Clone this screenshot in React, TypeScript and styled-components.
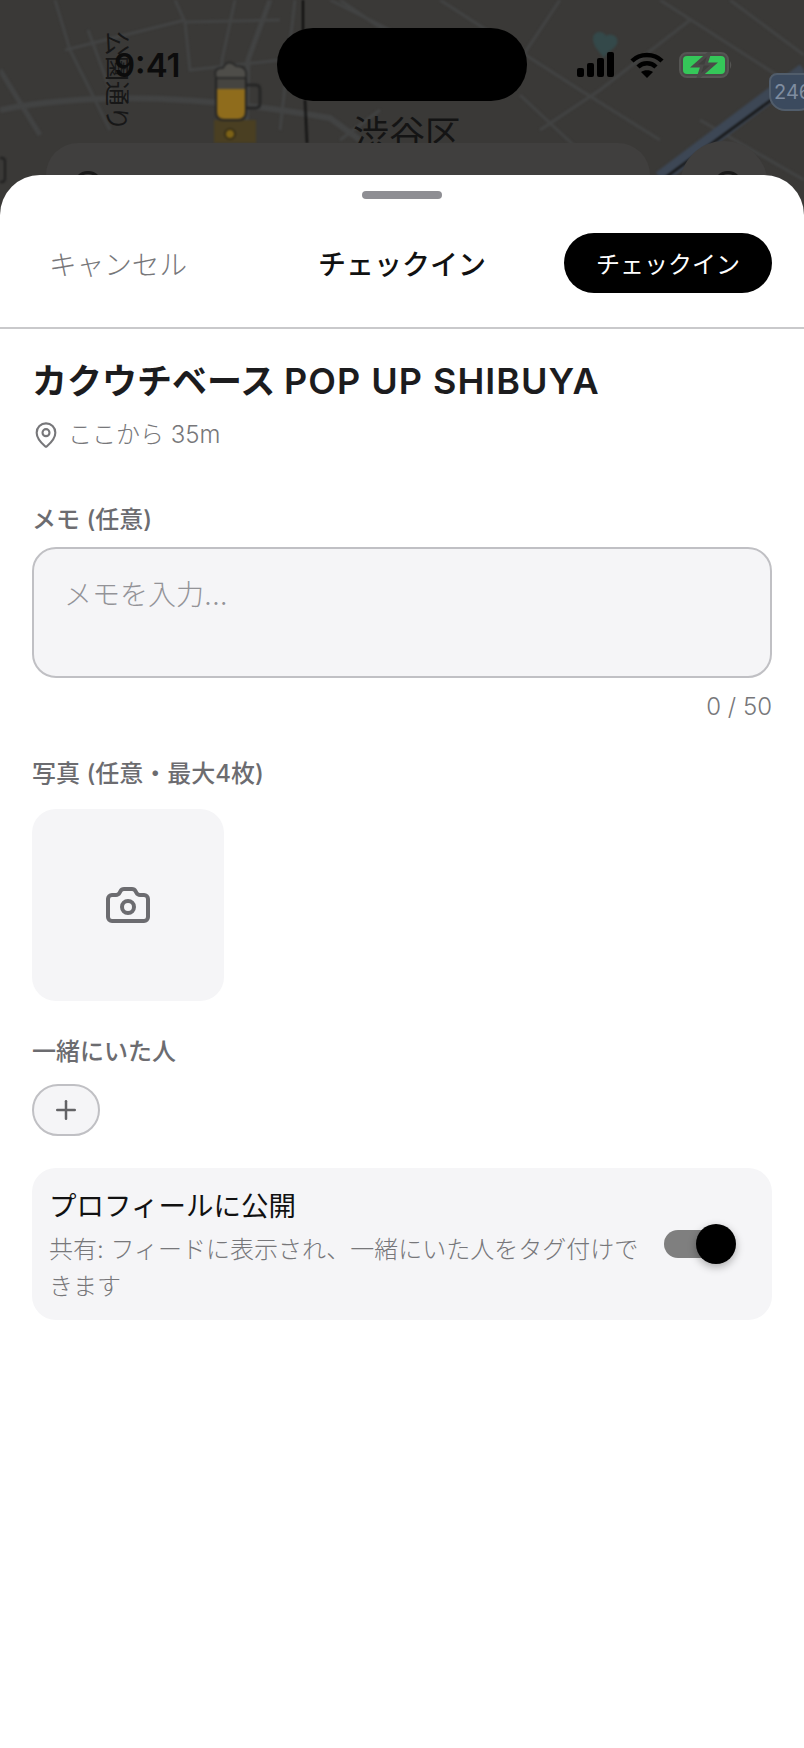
import styled, { createGlobalStyle } from "styled-components";
import { Camera, MapPin, Plus } from "lucide-react";

const GlobalStyle = createGlobalStyle`
  html, body {
    margin: 0;
    padding: 0;
    background: #3a3937;
  }
  * {
    box-sizing: border-box;
  }
  body {
    font-family: Inter, "Noto Sans CJK JP", sans-serif;
  }
`;

const Page = styled.div`
  width: 804px;
  height: 1748px;
  overflow: hidden;
  display: flex;
  flex-direction: column;
`;

const MapArea = styled.div`
  position: relative;
  flex: none;
  height: 225px;
  margin-bottom: -50px;
  background: #3a3937;
  overflow: hidden;
`;

const MapDrawing = styled.svg`
  position: absolute;
  inset: 0;
  width: 804px;
  height: 225px;
  filter: blur(0.8px);
`;

const DistrictLabel = styled.span`
  position: absolute;
  left: 353px;
  top: 110px;
  font-size: 36px;
  line-height: 48px;
  color: #141414;
`;

const RoadLabel = styled.span`
  position: absolute;
  left: 102px;
  top: 31px;
  font-size: 25px;
  line-height: 30px;
  color: #171717;
  writing-mode: vertical-rl;
  text-orientation: sideways;
`;

const SearchBar = styled.div`
  position: absolute;
  left: 46px;
  top: 143px;
  width: 604px;
  height: 90px;
  border-radius: 32px 32px 0 0;
  background: #403f3e;
  &::after {
    content: "";
    position: absolute;
    left: 27px;
    top: 28px;
    width: 24px;
    height: 24px;
    border-radius: 50%;
    border: 3px solid #1a1a1a;
  }
`;

const MapButton = styled.div`
  position: absolute;
  left: 680px;
  top: 141px;
  width: 88px;
  height: 88px;
  border-radius: 50%;
  background: #403f3e;
  &::after {
    content: "";
    position: absolute;
    left: 33px;
    top: 30px;
    width: 24px;
    height: 24px;
    border-radius: 50%;
    border: 3px solid #1a1a1a;
  }
`;

const RouteSign = styled.div`
  position: absolute;
  left: 769px;
  top: 73px;
  width: 46px;
  height: 38px;
  border-radius: 8px 8px 16px 16px;
  border: 2px solid #515d6b;
  background: #3b4a5e;
  color: #7f8da0;
  font-size: 20px;
  line-height: 34px;
  padding-left: 3px;
`;

const StatusBar = styled.div`
  position: absolute;
  top: 28px;
  left: 0;
  right: 0;
  height: 73px;
  display: grid;
  grid-template-columns: 277px 250px 1fr;
  align-items: center;
`;

const Time = styled.span`
  justify-self: start;
  margin-left: 114px;
  font-family: Inter, sans-serif;
  font-size: 33px;
  font-weight: 600;
  color: #0c0c0c;
`;

const Island = styled.div`
  height: 73px;
  border-radius: 36px;
  background: #000;
`;

const StatusIcons = styled.div`
  display: flex;
  align-items: center;
  margin-left: 50px;
  gap: 15px;
`;

const Sheet = styled.div`
  position: relative;
  flex: 1;
  display: flex;
  flex-direction: column;
  background: #fff;
  border-radius: 40px 40px 0 0;
`;

const Handle = styled.div`
  align-self: center;
  width: 80px;
  height: 8px;
  margin-top: 16px;
  border-radius: 4px;
  background: #8e8e93;
`;

const Header = styled.div`
  display: grid;
  grid-template-columns: 1fr auto 1fr;
  align-items: center;
  height: 130px;
  padding: 0 32px 1px;
  border-bottom: 2px solid #c9c9cb;
`;

const CancelText = styled.span`
  padding-left: 17px;
  font-size: 27.6px;
  font-weight: 300;
  color: #77777a;
`;

const HeaderTitle = styled.span`
  font-size: 28px;
  font-weight: 500;
  color: #111;
`;

const PrimaryButton = styled.button`
  justify-self: end;
  width: 208px;
  height: 60px;
  border: none;
  border-radius: 30px;
  background: #000;
  color: #fff;
  font: 400 24px Inter, "Noto Sans CJK JP", sans-serif;
`;

const Content = styled.div`
  display: flex;
  flex-direction: column;
  padding: 29px 32px 0;
`;

const PlaceName = styled.h1`
  margin: 0;
  font-size: 35px;
  line-height: 46px;
  font-weight: 600;
  color: #1c1c1e;
`;

const PlaceLatin = styled.span`
  font-size: 36px;
  letter-spacing: 1px;
`;

const DistanceRow = styled.div`
  display: flex;
  align-items: center;
  gap: 8px;
  margin-top: 13px;
  color: #77777a;
  font-size: 24px;
  line-height: 36px;
  font-weight: 300;
`;

const FieldLabel = styled.div<{ $top: number }>`
  margin-top: ${(p) => p.$top}px;
  font-size: 24px;
  line-height: 32px;
  font-weight: 500;
  color: #6c6c70;
`;

const MemoInput = styled.textarea`
  display: block;
  width: 100%;
  height: 131px;
  margin-top: 11px;
  padding: 27px 30px;
  border: 2px solid #c0c0c4;
  border-radius: 24px;
  background: #f5f5f7;
  resize: none;
  outline: none;
  font: 300 28px/38px Inter, "Noto Sans CJK JP", sans-serif;
  &::placeholder {
    color: #939397;
    opacity: 1;
  }
`;

const Counter = styled.div`
  margin-top: 12px;
  text-align: right;
  font-size: 24px;
  line-height: 34px;
  font-weight: 300;
  color: #77777a;
`;

const PhotoSlot = styled.div`
  width: 192px;
  height: 192px;
  margin-top: 19px;
  display: flex;
  align-items: center;
  justify-content: center;
  border-radius: 24px;
  background: #f5f5f7;
  color: #6c6c70;
`;

const AddPersonButton = styled.div`
  width: 68px;
  height: 52px;
  margin-top: 16px;
  display: flex;
  align-items: center;
  justify-content: center;
  border: 2px solid #c0c0c4;
  border-radius: 26px;
  background: #f5f5f7;
  color: #636366;
`;

const PublicCard = styled.div`
  margin-top: 32px;
  height: 152px;
  display: flex;
  align-items: center;
  padding: 0 48px 0 17px;
  border-radius: 24px;
  background: #f5f5f7;
`;

const PublicText = styled.div`
  width: 600px;
  flex: none;
  padding-top: 2px;
`;

const PublicTitle = styled.div`
  font-size: 27.5px;
  line-height: 40px;
  font-weight: 400;
  color: #111;
`;

const PublicHint = styled.div`
  margin-top: 5px;
  font-size: 24px;
  line-height: 37px;
  font-weight: 300;
  color: #77777a;
`;

const ToggleTrack = styled.div`
  position: relative;
  width: 60px;
  height: 28px;
  margin-left: auto;
  border-radius: 14px;
  background: #7f7f7f;
`;

const ToggleKnob = styled.div`
  position: absolute;
  right: -12px;
  top: -6px;
  width: 40px;
  height: 40px;
  border-radius: 50%;
  background: #000;
  box-shadow: 0 3px 8px rgba(0, 0, 0, 0.3);
`;

function MapRoads() {
  return (
    <MapDrawing viewBox="0 0 804 225" fill="none">
      <g stroke="#424343" strokeWidth="3">
        <path d="M55 0 L70 50 L110 130 M65 50 L185 20 M88 30 L112 95 M175 0 L185 22 L280 20 M235 0 L222 60 L218 130 M185 22 L190 70 L280 60 M295 0 L280 130" />
        <path d="M0 110 C 90 92 200 95 330 118 L 360 140" strokeWidth="6" />
        <path d="M0 70 L40 135 M270 0 L248 60 L246 140" strokeWidth="5" />
        <path d="M340 0 L420 55 M520 95 L600 170 L650 225 M330 0 L390 30 M440 0 L580 90 L660 140 M540 130 L600 90 L690 20 M660 0 L800 90 M730 0 L804 55 M700 120 L804 180" />
        <path d="M380 110 L340 140 M560 0 L520 60" />
      </g>
      <path d="M-4 158 H2 Q5 158 5 162 V178 Q5 182 2 182 H-4" stroke="#1f1f1f" strokeWidth="2" />
      <path d="M660 178 L804 70" stroke="#3d4755" strokeWidth="14" />
      <path d="M662 180 L804 76" stroke="#151515" strokeWidth="2.5" />
      <path d="M303 0 L303 50 M305 100 L307 143" stroke="#0b0b0b" strokeWidth="2" />
      <path d="M593 40 C592 30 604 30 606 36 C610 32 620 36 617 44 C614 50 606 52 604 58 C600 52 594 48 593 40 Z" fill="#34494a" />
      <rect x="214" y="120" width="42" height="23" fill="#4a3f22" />
      <circle cx="230" cy="134" r="5" fill="#7d6216" stroke="#2c2616" strokeWidth="1.5" />
      {/* beer mug */}
      <path d="M216 88 H246 V112 Q246 120 238 120 H224 Q216 120 216 112 Z" fill="#8f6c1c" />
      <path d="M216 76 H246 V89 H216 Z" fill="#454440" />
      <path d="M216 78 Q213 67 223 68 Q228 58 236 66 Q248 66 246 78 Z" fill="#4e4d49" stroke="#222" strokeWidth="1.5" />
      <path d="M216 78 V112 Q216 120 224 120 H238 Q246 120 246 112 V78" stroke="#232323" strokeWidth="2" />
      <path d="M246 85 H256 Q260 85 260 90 V103 Q260 108 256 108 H246" stroke="#232323" strokeWidth="2.5" />
    </MapDrawing>
  );
}

function SignalIcon() {
  return (
    <svg width="38" height="25" viewBox="0 0 38 25" fill="#000">
      <rect x="0" y="16" width="7" height="9" rx="2" />
      <rect x="10" y="11" width="7" height="14" rx="2" />
      <rect x="20" y="6" width="7" height="19" rx="2" />
      <rect x="30" y="0" width="7" height="25" rx="2" />
    </svg>
  );
}

function WifiIcon() {
  return (
    <svg width="34" height="26" viewBox="0 0 34 26" fill="none" stroke="#000" strokeWidth="4.5">
      <path d="M2 9 C10 1 24 1 32 9" />
      <path d="M8 15 C13 10 21 10 26 15" />
      <path d="M17 26 L11 20 C14 17.5 20 17.5 23 20 Z" fill="#000" stroke="none" />
    </svg>
  );
}

function BatteryIcon() {
  return (
    <svg width="54" height="26" viewBox="0 0 54 26" fill="none">
      <rect x="1" y="1" width="48" height="24" rx="7" fill="#4a4a48" stroke="#555553" strokeWidth="2" />
      <rect x="4" y="4" width="42" height="18" rx="4" fill="#35c759" />
      <path d="M51 9 Q53.5 13 51 17 Z" fill="#555553" />
      <path d="M31 0 L15 14 H23 L19 26 L35 12 H27 Z" fill="#3f3f3d" stroke="#4a4a48" strokeWidth="3" />
    </svg>
  );
}

export default function App() {
  return (
    <Page>
      <GlobalStyle />
      <MapArea>
        <MapRoads />
        <RoadLabel>公園通り</RoadLabel>
        <DistrictLabel>渋谷区</DistrictLabel>
        <RouteSign>246</RouteSign>
        <SearchBar />
        <MapButton />
        <StatusBar>
          <Time>9:41</Time>
          <Island />
          <StatusIcons>
            <SignalIcon />
            <WifiIcon />
            <BatteryIcon />
          </StatusIcons>
        </StatusBar>
      </MapArea>
      <Sheet>
        <Handle />
        <Header>
          <CancelText>キャンセル</CancelText>
          <HeaderTitle>チェックイン</HeaderTitle>
          <PrimaryButton>チェックイン</PrimaryButton>
        </Header>
        <Content>
          <PlaceName>
            カクウチベース <PlaceLatin>POP UP SHIBUYA</PlaceLatin>
          </PlaceName>
          <DistanceRow>
            <MapPin size={28} strokeWidth={1.8} />
            ここから 35m
          </DistanceRow>
          <FieldLabel $top={51}>メモ (任意)</FieldLabel>
          <MemoInput placeholder="メモを入力..." readOnly />
          <Counter>0 / 50</Counter>
          <FieldLabel $top={34}>写真 (任意・最大4枚)</FieldLabel>
          <PhotoSlot>
            <Camera size={48} strokeWidth={2} />
          </PhotoSlot>
          <FieldLabel $top={35}>一緒にいた人</FieldLabel>
          <AddPersonButton>
            <Plus size={30} strokeWidth={2} />
          </AddPersonButton>
          <PublicCard>
            <PublicText>
              <PublicTitle>プロフィールに公開</PublicTitle>
              <PublicHint>共有: フィードに表示され、一緒にいた人をタグ付けできます</PublicHint>
            </PublicText>
            <ToggleTrack>
              <ToggleKnob />
            </ToggleTrack>
          </PublicCard>
        </Content>
      </Sheet>
    </Page>
  );
}
